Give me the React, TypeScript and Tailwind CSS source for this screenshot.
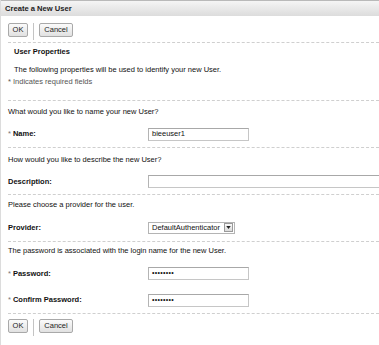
import React from 'react';

const font = { fontFamily: '"Liberation Sans", Arial, sans-serif' };

const Button: React.FC<{ label: string; w: string }> = ({ label, w }) => (
  <button
    className={`${w} h-[14px] border border-[#a9a9a9] rounded-[2px] bg-gradient-to-b from-[#fbfbfb] to-[#e1e1e1] text-[7.5px] text-[#222] leading-none flex items-center justify-center`}
  >
    {label}
  </button>
);

const Toolbar: React.FC = () => (
  <div className="flex items-start">
    <Button label="OK" w="w-[20px]" />
    <div className="w-px h-[17px] bg-[#c4c4c4] mx-[5px]" />
    <Button label="Cancel" w="w-[34px]" />
  </div>
);

const Divider = () => <div className="border-b border-dashed border-[#cfcfcf]" />;

const Label: React.FC<{ text: string; req?: boolean }> = ({ text, req }) => (
  <div className="w-[140px] shrink-0 text-[7.5px] font-bold text-[#111]">
    {req && <span className="font-normal text-[#777] mr-[2px]">*</span>}
    {text}
  </div>
);

const TextBox: React.FC<{ value?: string; w: string; pw?: boolean }> = ({ value, w, pw }) => (
  <div
    className={`${w} h-[13px] shrink-0 border border-[#c6c6c6] border-t-[#a8a8a8] border-l-[#b4b4b4] bg-white flex items-center px-[3px] text-[#111] ${pw ? 'text-[7px] tracking-[0.3px]' : 'text-[7.5px]'}`}
  >
    {value}
  </div>
);

const Line: React.FC<{ text: string; cls?: string }> = ({ text, cls }) => (
  <div className={`h-[12px] leading-[12px] text-[7.5px] text-[#111] ${cls ?? ''}`}>{text}</div>
);

export default function App() {
  return (
    <div style={font} className="w-[379px] h-[345px] bg-white overflow-hidden border-l border-[#dcdcdc]">
      <div className="h-[16px] border-t border-[#b9b9b9] bg-gradient-to-b from-[#f5f5f5] to-[#dcdcdc] flex items-center pl-[4px] text-[7.6px] font-bold text-[#222]">
        Create a New User
      </div>
      <div className="pl-[7px]">
        <div className="pt-[7px] h-[26px]">
          <Toolbar />
        </div>
        <Divider />

        <div className="pl-[6px] mt-[3px] h-[12px] leading-[12px] text-[7.5px] font-bold text-[#111]">User Properties</div>
        <Line text="The following properties will be used to identify your new User." cls="pl-[6px] mt-[6px]" />
        <Line text="* Indicates required fields" cls="text-[#555]" />
        <div className="h-[12px]" />
        <Divider />

        <Line text="What would you like to name your new User?" cls="mt-[5px]" />
        <div className="flex items-center h-[14px] mt-[9px]">
          <Label text="Name:" req />
          <TextBox value="bieeuser1" w="w-[101px]" />
        </div>
        <div className="h-[6px]" />
        <Divider />

        <Line text="How would you like to describe the new User?" cls="mt-[6px]" />
        <div className="flex items-center h-[13px] mt-[9px]">
          <Label text="Description:" />
          <TextBox w="w-[250px]" />
        </div>
        <div className="h-[6px]" />
        <Divider />

        <Line text="Please choose a provider for the user." cls="mt-[4px]" />
        <div className="flex items-center h-[13px] mt-[10px]">
          <Label text="Provider:" />
          <div className="w-[87px] h-[12px] border border-[#b4b4b4] bg-white flex items-center text-[7.5px] text-[#111]">
            <span className="flex-1 pl-[3px] leading-none">DefaultAuthenticator</span>
            <span className="w-[9px] h-[9px] mr-[1px] border border-[#9a9a9a] bg-gradient-to-b from-[#fafafa] to-[#dadada] flex items-center justify-center">
              <svg width="5" height="3" viewBox="0 0 6 4">
                <path d="M0 0h6L3 4z" fill="#222" />
              </svg>
            </span>
          </div>
        </div>
        <div className="h-[7px]" />
        <Divider />

        <Line text="The password is associated with the login name for the new User." cls="mt-[3px]" />
        <div className="flex items-center h-[13px] mt-[10px]">
          <Label text="Password:" req />
          <TextBox value="••••••••" w="w-[101px]" pw />
        </div>
        <div className="flex items-center h-[12px] mt-[14px]">
          <Label text="Confirm Password:" req />
          <TextBox value="••••••••" w="w-[101px]" pw />
        </div>
        <div className="h-[7px]" />
        <Divider />

        <div className="mt-[5px]">
          <Toolbar />
        </div>
      </div>
    </div>
  );
}
